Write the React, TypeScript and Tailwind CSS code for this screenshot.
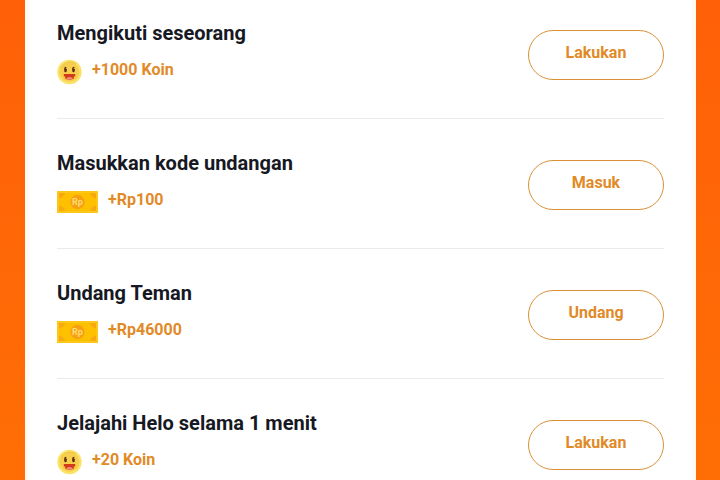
import React from "react";

interface Task {
  title: string;
  reward: string;
  kind: "coin" | "cash";
  action: string;
}

const tasks: Task[] = [
  { title: "Mengikuti seseorang", reward: "+1000 Koin", kind: "coin", action: "Lakukan" },
  { title: "Masukkan kode undangan", reward: "+Rp100", kind: "cash", action: "Masuk" },
  { title: "Undang Teman", reward: "+Rp46000", kind: "cash", action: "Undang" },
  { title: "Jelajahi Helo selama 1 menit", reward: "+20 Koin", kind: "coin", action: "Lakukan" },
];

const CoinIcon = () => (
  <svg className="mt-1 h-[26px] w-[25px] shrink-0" viewBox="0 0 25 26" aria-hidden="true">
    <circle cx="12.5" cy="13" r="12.2" fill="#fbe36a" />
    <circle cx="12.5" cy="13" r="10" fill="#f8cf4c" />
    <path d="M4 9a10 10 0 0 1 15-4" fill="none" stroke="#ecc044" strokeWidth="1" />
    <ellipse cx="8.5" cy="10.5" rx="1.4" ry="2.8" fill="#5c2c12" />
    <ellipse cx="16.5" cy="10.5" rx="1.4" ry="2.8" fill="#5c2c12" />
    <circle cx="9.3" cy="9.4" r="0.6" fill="#e8b25c" />
    <circle cx="17.3" cy="9.4" r="0.6" fill="#e8b25c" />
    <path d="M6.8 15h11.4v2.4h-1.4v2.4q-4.3 1.8-8.6 0v-2.4H6.8z" fill="#d23a18" />
    <path d="M9.5 19q3-1.8 6 0v1q-3 1-6 0z" fill="#f58d78" />
  </svg>
);

const CashIcon = () => (
  <svg className="mt-1 h-[26px] w-[41px] shrink-0" viewBox="0 0 41 26" aria-hidden="true">
    <path d="M0 2h41v22H0z" fill="#fbc81a" />
    <path d="M2 4h37v18H2z" fill="#ffc000" />
    <path
      d="M2 4h6q-1 4.500-6 5.500zM39 4h-6q1 4.500 6 5.500zM2 22h6q-1-4.500-6-5.500zM39 22h-6q1-4.500 6-5.500z"
      fill="#f8a910"
    />
    <circle cx="20.5" cy="13" r="7.200" fill="#f8a013" />
    <text
      x="20.5"
      y="16"
      textAnchor="middle"
      fontSize="9"
      fontWeight="700"
      fontFamily="Roboto, sans-serif"
      fill="#ffdc70"
    >
      Rp
    </text>
  </svg>
);

const TaskRow = ({ title, reward, kind, action }: Task) => {
  return (
    <li className="flex items-start justify-between border-b border-[#ebebeb] pt-[30px] pb-[31px]">
      <div>
        <h2 className="text-xl leading-7 font-bold text-[#161823]">{title}</h2>
        <div className="mt-2 flex h-8 items-start gap-[10px]">
          {kind === "coin" ? <CoinIcon /> : <CashIcon />}
          <span className="text-base leading-[30px] font-bold text-[#e18a27]">{reward}</span>
        </div>
      </div>
      <button
        type="button"
        className="mt-[11px] h-[50px] w-[136px] cursor-pointer rounded-full border border-[#d99036] pb-1 text-base font-bold text-[#e18a27]"
      >
        {action}
      </button>
    </li>
  );
};

export default function App() {
  return (
    <div className="h-screen overflow-hidden bg-linear-to-b from-[#ff6008] to-[#ff6e05] pr-6 pl-[25px] font-[Roboto,sans-serif]">
      <main className="h-full overflow-hidden border-x-4 border-[#fffaf2] bg-white px-7">
        <ul className="-mt-[11px]">
          {tasks.map((task) => (
            <TaskRow key={task.title} {...task} />
          ))}
        </ul>
      </main>
    </div>
  );
}
